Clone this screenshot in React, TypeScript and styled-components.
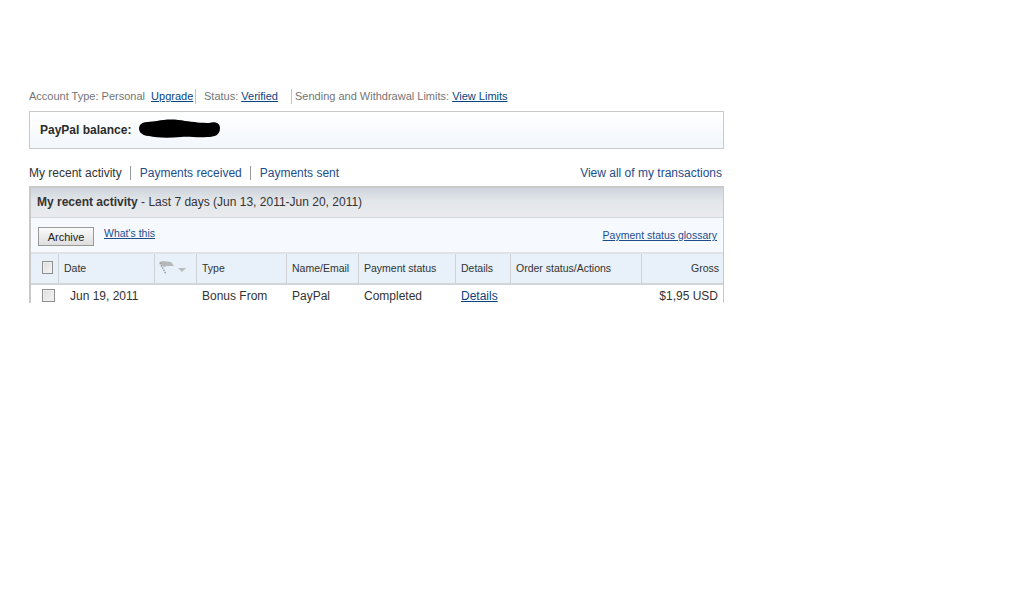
import React from "react";
import styled, { createGlobalStyle } from "styled-components";

const Global = createGlobalStyle`
  html, body { margin: 0; padding: 0; background: #fff; }
  body { font-family: "Liberation Sans", Arial, sans-serif; font-size: 11px; color: #333; }
`;

const Page = styled.div`
  width: 695px;
  height: 303px;
  margin-left: 29px;
  padding-top: 89px;
  box-sizing: border-box;
  overflow: hidden;
`;

const AccountBar = styled.div`
  display: flex;
  align-items: center;
  height: 15px;
  line-height: 15px;
  font-size: 11px;
  color: #757575;
`;

const Segment = styled.span<{ $pl: number; $w: number; $divider?: boolean }>`
  display: block;
  box-sizing: border-box;
  flex: none;
  width: ${(p) => p.$w}px;
  padding-left: ${(p) => p.$pl}px;
  white-space: nowrap;
  border-right: ${(p) => (p.$divider ? "1px solid #c4c4c4" : "none")};
`;

const SmallLink = styled.a`
  color: #084482;
  text-decoration: underline;
  font-size: 11px;
`;

const BalanceBox = styled.div`
  box-sizing: border-box;
  height: 38px;
  margin-top: 7px;
  padding-left: 10px;
  display: flex;
  align-items: center;
  gap: 6px;
  border: 1px solid #c9c9c9;
  background: linear-gradient(#ffffff, #f2f7fc);
`;

const BalanceLabel = styled.strong`
  font-size: 12px;
  color: #2b2b2b;
`;

const Redaction = styled.svg`
  display: block;
  width: 84px;
  height: 22px;
  margin-top: -3px;
`;

const TabBar = styled.div`
  display: flex;
  justify-content: space-between;
  align-items: center;
  margin-top: 16px;
  height: 15px;
  padding-right: 2px;
  font-size: 12px;
`;

const Tabs = styled.div`
  display: flex;
  align-items: center;
`;

const Tab = styled.span<{ $active?: boolean; $last?: boolean }>`
  display: block;
  line-height: 14px;
  padding-right: ${(p) => (p.$last ? 0 : 8)}px;
  margin-right: ${(p) => (p.$last ? 0 : 9)}px;
  border-right: ${(p) => (p.$last ? "none" : "1px solid #999")};
  color: ${(p) => (p.$active ? "#333" : "#1d4d8c")};
`;

const AllLink = styled.span`
  color: #1d4d8c;
`;

const Panel = styled.div`
  margin-top: 6px;
  border: 2px solid #c9c9c9;
  border-bottom: none;
  border-right-width: 1px;
`;

const PanelTitle = styled.div`
  box-sizing: border-box;
  height: 30px;
  padding: 0 0 2px 6px;
  display: flex;
  align-items: center;
  white-space: pre;
  font-size: 12px;
  color: #333;
  border-bottom: 1px solid #d5d9dd;
  background: linear-gradient(#ced5dc 0%, #e3e6ea 45%, #e9ebee 100%);
`;

const Toolbar = styled.div`
  box-sizing: border-box;
  height: 36px;
  display: flex;
  justify-content: space-between;
  padding: 9px 6px 0 7px;
  background: #f6faff;
  border-bottom: 2px solid #dfe3e7;
`;

const ToolbarLeft = styled.div`
  display: flex;
  align-items: flex-start;
  gap: 10px;
`;

const ArchiveButton = styled.button`
  box-sizing: border-box;
  width: 56px;
  height: 19px;
  padding: 1px 0 0;
  font-family: inherit;
  font-size: 11px;
  color: #222;
  border: 1px solid #999;
  border-radius: 0;
  background: linear-gradient(#fafafa, #dedede);
`;

const ToolbarLink = styled.a<{ $top: number }>`
  display: block;
  margin-top: ${(p) => p.$top}px;
  color: #1d4d8c;
  font-size: 10.5px;
  text-decoration: underline;
`;

const Row = styled.div`
  display: grid;
  grid-template-columns: 28px 96px 42px 90px 72px 97px 55px 131px 81px;
`;

const HeadRow = styled(Row)`
  height: 31px;
  background: #e8f0f9;
  border-bottom: 2px solid #d2d5d8;
  box-sizing: border-box;
`;

const HeadCell = styled.div<{ $right?: boolean; $last?: boolean }>`
  display: flex;
  align-items: center;
  justify-content: ${(p) => (p.$right ? "flex-end" : "flex-start")};
  gap: 4px;
  box-sizing: border-box;
  padding: 0 ${(p) => (p.$right ? 4 : 5)}px 2px 5px;
  font-size: 10.5px;
  color: #333;
  white-space: nowrap;
  border-right: ${(p) => (p.$last ? "none" : "1px solid #cfd3d6")};
`;

const BodyCell = styled.div<{ $right?: boolean; $pl?: number }>`
  box-sizing: border-box;
  height: 22px;
  line-height: 22px;
  padding-left: ${(p) => p.$pl ?? 5}px;
  padding-right: ${(p) => (p.$right ? 5 : 0)}px;
  text-align: ${(p) => (p.$right ? "right" : "left")};
  font-size: 12px;
  color: #333;
  white-space: nowrap;
`;

const DetailsLink = styled.a`
  color: #084482;
  text-decoration: underline;
`;

const Check = styled.span<{ $mt?: number }>`
  display: block;
  box-sizing: border-box;
  width: 13px;
  height: 13px;
  margin-left: 6px;
  margin-top: ${(p) => p.$mt ?? 0}px;
  border: 1px solid #8e8f8f;
  outline: 1px solid #f0f0f0;
  outline-offset: -2px;
  background: linear-gradient(135deg, #dcdcdc, #f6f6f6);
`;

const FlagIcon = styled.svg`
  display: block;
  width: 30px;
  height: 14px;
  margin-left: -1px;
`;

const columns = ["Date", "", "Type", "Name/Email", "Payment status", "Details", "Order status/Actions"];

export default function App() {
  return (
    <>
      <Global />
      <Page>
        <AccountBar>
          <Segment $pl={0} $w={167} $divider>
            Account Type: Personal&nbsp;&nbsp;<SmallLink>Upgrade</SmallLink>
          </Segment>
          <Segment $pl={8} $w={96} $divider>
            Status: <SmallLink>Verified</SmallLink>
          </Segment>
          <Segment $pl={3} $w={300}>
            Sending and Withdrawal Limits: <SmallLink>View Limits</SmallLink>
          </Segment>
        </AccountBar>
        <BalanceBox>
          <BalanceLabel>PayPal balance:</BalanceLabel>
          <Redaction viewBox="0 0 84 22">
            <path
              d="M3 7 C6 3 14 4 20 3 C28 1 40 1 48 3 C56 4 66 5 72 5 C78 3 83 5 83 10 C83 17 78 19 70 19 C60 20 52 18 44 19 C32 20 20 20 12 18 C4 18 0 12 3 7 Z"
              fill="#000"
            />
          </Redaction>
        </BalanceBox>
        <TabBar>
          <Tabs>
            <Tab $active>My recent activity</Tab>
            <Tab>Payments received</Tab>
            <Tab $last>Payments sent</Tab>
          </Tabs>
          <AllLink>View all of my transactions</AllLink>
        </TabBar>
        <Panel>
          <PanelTitle>
            <strong>My recent activity</strong> - Last 7 days (Jun 13, 2011-Jun 20, 2011)
          </PanelTitle>
          <Toolbar>
            <ToolbarLeft>
              <ArchiveButton>Archive</ArchiveButton>
              <ToolbarLink $top={0}>What's this</ToolbarLink>
            </ToolbarLeft>
            <ToolbarLink $top={2}>Payment status glossary</ToolbarLink>
          </Toolbar>
          <HeadRow>
            <HeadCell>
              <Check />
            </HeadCell>
            {columns.map((c, i) => (
              <HeadCell key={i}>
                {c === "" ? (
                  <FlagIcon viewBox="0 0 30 14">
                    <path d="M0 1 L4 0 L12 1 L15 5 L8 5 L5 6 Z" fill="#b5b8ba" />
                    <path d="M1 2 L7 13" stroke="#9a9c9e" strokeWidth="1.6" strokeDasharray="1.5 1" />
                    <path d="M19 7 H27 L23 11 Z" fill="#b9bdc0" />
                  </FlagIcon>
                ) : (
                  c
                )}
              </HeadCell>
            ))}
            <HeadCell $right $last>
              Gross
            </HeadCell>
          </HeadRow>
          <Row>
            <BodyCell>
              <Check $mt={4} />
            </BodyCell>
            <BodyCell $pl={11}>Jun 19, 2011</BodyCell>
            <BodyCell />
            <BodyCell>Bonus From</BodyCell>
            <BodyCell>PayPal</BodyCell>
            <BodyCell>Completed</BodyCell>
            <BodyCell>
              <DetailsLink>Details</DetailsLink>
            </BodyCell>
            <BodyCell />
            <BodyCell $right>$1,95 USD</BodyCell>
          </Row>
        </Panel>
      </Page>
    </>
  );
}
